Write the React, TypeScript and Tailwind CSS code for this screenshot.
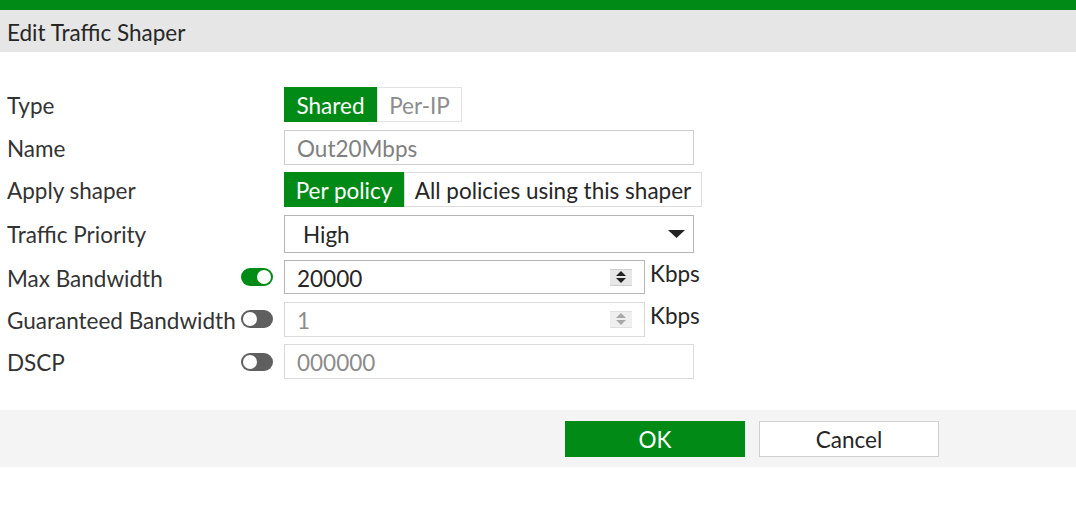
import React from 'react';

const font = { fontFamily: 'Lato, "Noto Sans", sans-serif' };

const Toggle: React.FC<{ on?: boolean }> = ({ on }) => (
  <div
    className={`w-[32px] h-[18px] rounded-full flex items-center p-[2px] ${
      on ? 'bg-[#018a16] justify-end' : 'bg-[#5f5f5f] justify-start'
    }`}
  >
    <div className="w-[14px] h-[14px] rounded-full bg-white" />
  </div>
);

const Spinner: React.FC<{ disabled?: boolean }> = ({ disabled }) => (
  <div
    className={`w-[22px] h-[17px] flex flex-col items-center justify-center gap-[2px] border-t border-b ${
      disabled ? 'bg-[#efefef] border-[#e0e0e0]' : 'bg-[#e6e6e6] border-[#cfcfcf]'
    }`}
  >
    <svg width="10" height="5" viewBox="0 0 10 5">
      <path d="M0 5 L5 0 L10 5 Z" fill={disabled ? '#a8a8a8' : '#222'} />
    </svg>
    <svg width="10" height="5" viewBox="0 0 10 5">
      <path d="M0 0 L5 5 L10 0 Z" fill={disabled ? '#a8a8a8' : '#222'} />
    </svg>
  </div>
);

const Row: React.FC<{ label: string; toggle?: React.ReactNode; children: React.ReactNode }> = ({
  label,
  toggle,
  children,
}) => (
  <div className="flex items-center">
    <div className="w-[284px] pl-[7px] pr-[11px] flex items-center justify-between text-[22.5px] leading-none text-[#333]">
      <span className="pt-[4px]">{label}</span>
      {toggle}
    </div>
    {children}
  </div>
);

export default function App() {
  return (
    <div className="w-[1076px] h-[506px] bg-white leading-none" style={font}>
      <div className="h-[10px] bg-[#018a16]" />
      <div className="h-[42px] bg-[#e6e6e6] flex items-center pl-[7px] pt-[4px] text-[22.5px] text-[#262626]">
        Edit Traffic Shaper
      </div>

      <div className="pt-[35px] pb-[31px] flex flex-col gap-[7.5px]">
        <Row label="Type">
          <div className="flex h-[35px] text-[22.5px]">
            <div className="w-[93px] pt-[4px] bg-[#018a16] text-white flex items-center justify-center">Shared</div>
            <div className="w-[85px] pt-[4px] border border-[#e2e2e2] text-[#8c8c8c] flex items-center justify-center">
              Per-IP
            </div>
          </div>
        </Row>

        <Row label="Name">
          <div className="w-[410px] h-[35px] pt-[4px] border border-[#cdcdcd] flex items-center px-[12px] text-[22.5px] text-[#808080]">
            Out20Mbps
          </div>
        </Row>

        <Row label="Apply shaper">
          <div className="flex h-[35px] text-[22.5px]">
            <div className="w-[120px] pt-[4px] bg-[#018a16] text-white flex items-center justify-center">Per policy</div>
            <div className="w-[298px] pt-[4px] border border-[#dcdcdc] text-[#262626] flex items-center justify-center">
              All policies using this shaper
            </div>
          </div>
        </Row>

        <Row label="Traffic Priority">
          <div className="w-[410px] h-[38px] border border-[#b5b5b5] flex items-center justify-between pl-[18px] pr-[8px] text-[22.5px] text-[#262626]">
            <span className="pt-[4px]">High</span>
            <svg width="17" height="8" viewBox="0 0 17 8">
              <path d="M0 0 L17 0 L8.5 8 Z" fill="#222" />
            </svg>
          </div>
        </Row>

        <Row label="Max Bandwidth" toggle={<Toggle on />}>
          <div className="w-[361px] h-[34px] border border-[#b5b5b5] flex items-center justify-between pl-[12px] pr-[12px] text-[22.5px] text-[#262626]">
            <span className="pt-[4px]">20000</span>
            <Spinner />
          </div>
          <span className="ml-[5px] self-start mt-[3px] text-[22.5px] text-[#262626]">Kbps</span>
        </Row>

        <Row label="Guaranteed Bandwidth" toggle={<Toggle />}>
          <div className="w-[361px] h-[35px] border border-[#dadada] flex items-center justify-between pl-[12px] pr-[12px] text-[22.5px] text-[#8c8c8c]">
            <span className="pt-[4px]">1</span>
            <Spinner disabled />
          </div>
          <span className="ml-[5px] self-start mt-[3px] text-[22.5px] text-[#262626]">Kbps</span>
        </Row>

        <Row label="DSCP" toggle={<Toggle />}>
          <div className="w-[410px] h-[35px] pt-[4px] border border-[#dadada] flex items-center px-[12px] text-[22.5px] text-[#8c8c8c]">
            000000
          </div>
        </Row>
      </div>

      <div className="h-[57px] bg-[#f4f4f4] flex items-center pl-[565px] gap-[14px] text-[22.5px]">
        <div className="w-[180px] h-[36px] pt-[4px] bg-[#018a16] text-white flex items-center justify-center">OK</div>
        <div className="w-[180px] h-[36px] pt-[4px] bg-white border border-[#cfcfcf] text-[#262626] flex items-center justify-center">
          Cancel
        </div>
      </div>
    </div>
  );
}
